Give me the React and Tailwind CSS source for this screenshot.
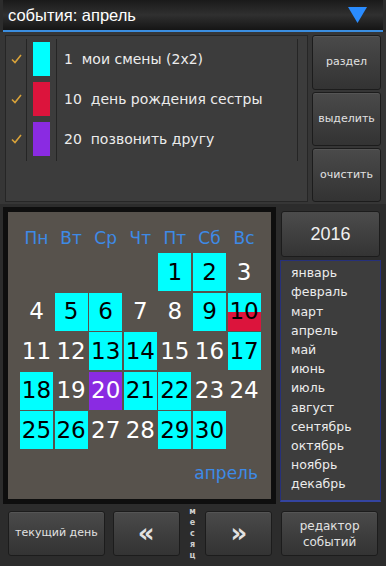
import React from "react";

const events = [
  { color: "bg-[#00ffff]", label: "1  мои смены (2x2)" },
  { color: "bg-[#dc143c]", label: "10  день рождения сестры" },
  { color: "bg-[#8a2be2]", label: "20  позвонить другу" },
];

const weekDays = ["Пн", "Вт", "Ср", "Чт", "Пт", "Сб", "Вс"];

const months = [
  "январь", "февраль", "март", "апрель", "май", "июнь",
  "июль", "август", "сентябрь", "октябрь", "ноябрь", "декабрь",
];

// days marked as shifts
const shifts = [1, 2, 5, 6, 9, 13, 14, 17, 18, 21, 22, 25, 26, 29, 30];

function Check() {
  return (
    <svg width="11" height="10" viewBox="0 0 11 10">
      <path d="M1 5.5 L4 8.5 L10 1" fill="none" stroke="#d8a23a" strokeWidth="1.6" />
    </svg>
  );
}

function SideButton({ children, className }) {
  return (
    <button
      className={
        "flex items-center justify-center rounded-[3px] border border-[#1c1c1c] bg-gradient-to-b from-[#4a4a4a] to-[#333333] text-[11px] text-[#e2e2e2] shadow-[inset_0_1px_0_#555] " +
        (className || "")
      }
    >
      {children}
    </button>
  );
}

function DayCell({ day }) {
  if (!day) return <div className="h-[38px]" />;
  const base = "h-[38px] flex items-center justify-center text-[23px] leading-none";
  if (day === 10) {
    return (
      <div className="relative h-[38px] flex flex-col">
        <div className="h-[19px] bg-[#00ffff]" />
        <div className="h-[19px] bg-[#dc143c]" />
        <span className="absolute inset-0 flex items-center justify-center text-[23px] leading-none text-black">10</span>
      </div>
    );
  }
  if (day === 20) return <div className={base + " bg-[#8a2be2] text-white"}>20</div>;
  if (shifts.includes(day)) return <div className={base + " bg-[#00ffff] text-black"}>{day}</div>;
  return <div className={base + " text-white"}>{day}</div>;
}

export default function App() {
  const cells = [null, null, null, null];
  for (let d = 1; d <= 30; d++) cells.push(d);

  return (
    <div
      className="w-[386px] h-[566px] overflow-hidden bg-[#2c2c2c] flex flex-col"
      style={{ fontFamily: '"DejaVu Sans", sans-serif' }}
    >
      {/* header */}
      <div className="mx-[3px] h-[32px] flex items-center justify-between border-b-2 border-[#3b8ee0] bg-gradient-to-b from-[#1a1a1a] via-[#303030] to-[#151515] pl-[5px] pr-[16px]">
        <span className="text-[16.5px] text-white" style={{ fontFamily: '"Liberation Sans", sans-serif' }}>
          события: апрель
        </span>
        <svg width="19" height="16" viewBox="0 0 19 16">
          <path d="M0 0 H19 L9.5 16 Z" fill="#2a8cff" />
        </svg>
      </div>

      {/* events section */}
      <div className="flex h-[172px] gap-[4px] bg-[#363636] px-[5px] pt-[3px] pb-[2px]">
        <div className="flex-1 border border-[#262626] bg-[#3c3c3c] pt-[3px]">
          <div className="flex h-[122px] w-[292px]">
            <div className="w-[21px] border-r border-[#252525] flex flex-col">
              {events.map((e, i) => (
                <div key={i} className="h-[40px] flex items-center justify-center">
                  <Check />
                </div>
              ))}
            </div>
            <div className="w-[30px] border-r border-[#252525] flex flex-col items-center">
              {events.map((e, i) => (
                <div key={i} className="h-[40px] flex items-center">
                  <div className={"w-[17px] h-[34px] " + e.color} />
                </div>
              ))}
            </div>
            <div className="flex-1 border-r border-[#252525] flex flex-col pl-[7px]">
              {events.map((e, i) => (
                <div key={i} className="h-[40px] flex items-center text-[14px] text-[#ececec] whitespace-pre">
                  {e.label}
                </div>
              ))}
            </div>
          </div>
        </div>
        <div className="w-[69px] flex flex-col gap-[2px]">
          <SideButton className="h-[55px]">раздел</SideButton>
          <SideButton className="h-[54px]">выделить</SideButton>
          <SideButton className="h-[54px]">очистить</SideButton>
        </div>
      </div>

      {/* calendar section */}
      <div className="flex gap-[4px] px-[3px] pt-[3px]">
        <div className="w-[273px] h-[297px] bg-[#0e0e0e] p-[5px]">
          <div className="h-full bg-[#57524c] pl-[12px] pt-[15px] flex flex-col">
            <div className="grid grid-cols-[repeat(7,33px)] gap-x-[1.6px] h-[22px] text-[17px] text-[#3d8ae6] leading-none">
              {weekDays.map((w) => (
                <div key={w} className="flex items-center justify-center">{w}</div>
              ))}
            </div>
            <div className="mt-[4px] grid grid-cols-[repeat(7,33px)] gap-x-[1.6px] gap-y-[1.6px]">
              {cells.map((d, i) => (
                <DayCell key={i} day={d} />
              ))}
            </div>
            <div className="mt-[12px] pr-[13px] text-right text-[17px] text-[#3d8ae6]">апрель</div>
          </div>
        </div>
        <div className="w-[101px] flex flex-col gap-[3px] pt-[4px]">
          <div
            className="h-[46px] mx-[1px] flex items-center justify-center rounded-[3px] border border-[#1c1c1c] bg-gradient-to-b from-[#4c4c4c] to-[#343434] text-[18px] text-[#f0f0f0]"
            style={{ fontFamily: '"Liberation Sans", sans-serif' }}
          >
            2016
          </div>
          <div className="h-[242px] border border-[#26307a] border-b-2 border-b-[#3444a0] bg-[#3d3d3d] pl-[10px] pt-[3px] flex flex-col">
            {months.map((m) => (
              <div key={m} className="h-[19.2px] flex items-center text-[12.5px] text-[#ececec]">
                {m}
              </div>
            ))}
          </div>
        </div>
      </div>

      {/* bottom buttons */}
      <div className="flex items-center px-[8px] pt-[2px]">
        <SideButton className="w-[97px] h-[45px]">текущий день</SideButton>
        <SideButton className="ml-[8px] w-[67px] h-[45px] text-[26px] font-bold">«</SideButton>
        <div className="w-[26px] flex flex-col items-center text-[8px] font-bold leading-[11px] text-[#cfcfcf]">
          {"месяц".split("").map((c, i) => (
            <span key={i}>{c}</span>
          ))}
        </div>
        <SideButton className="w-[67px] h-[45px] text-[26px] font-bold">»</SideButton>
        <SideButton className="ml-[9px] w-[97px] h-[45px] text-[12px] leading-[16px] text-center">
          редактор
          <br />
          событий
        </SideButton>
      </div>
    </div>
  );
}
